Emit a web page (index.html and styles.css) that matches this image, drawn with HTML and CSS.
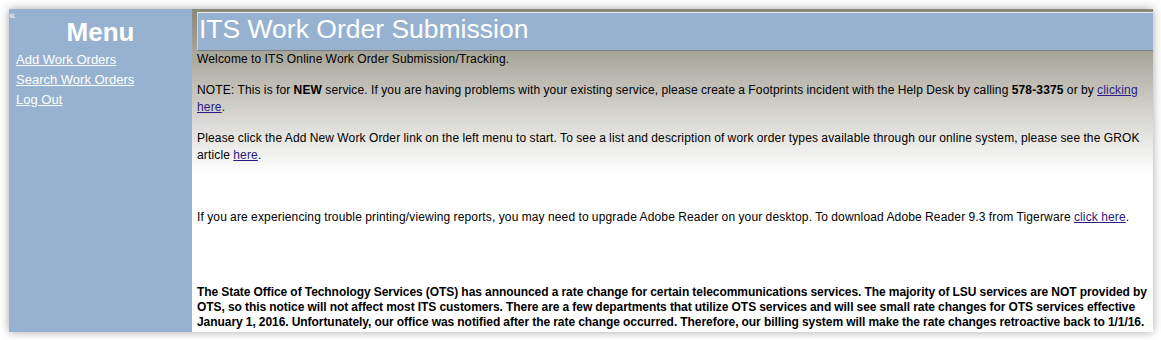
FILE: index.html
```html
<!DOCTYPE html>
<html>
<head>
<meta charset="utf-8">
<link rel="stylesheet" href="styles.css">
</head>
<body>
<div class="window">
  <aside class="sidebar">
    <div class="collapse">&laquo;</div>
    <h2 class="menu-title">Menu</h2>
    <nav class="menu-links">
      <a href="#">Add Work Orders</a>
      <a href="#">Search Work Orders</a>
      <a href="#">Log Out</a>
    </nav>
  </aside>
  <main class="main">
    <h1 class="title">ITS Work Order Submission</h1>
    <p class="para">Welcome to ITS Online Work Order Submission/Tracking.</p>
    <p class="para gap">NOTE: This is for <b>NEW</b> service. If you are having problems with your existing service, please create a Footprints incident with the Help Desk by calling <b>578-3375</b> or by <a href="#">clicking here</a>.</p>
    <p class="para gap">Please click the Add New Work Order link on the left menu to start. To see a list and description of work order types available through our online system, please see the GROK article <a href="#">here</a>.</p>
    <p class="para gap-lg">If you are experiencing trouble printing/viewing reports, you may need to upgrade Adobe Reader on your desktop. To download Adobe Reader 9.3 from Tigerware <a href="#">click here</a>.</p>
    <p class="notice">The State Office of Technology Services (OTS) has announced a rate change for certain telecommunications services. The majority of LSU services are NOT provided by OTS, so this notice will not affect most ITS customers. There are a few departments that utilize OTS services and will see small rate changes for OTS services effective January 1, 2016. Unfortunately, our office was notified after the rate change occurred. Therefore, our billing system will make the rate changes retroactive back to 1/1/16.</p>
  </main>
</div>
</body>
</html>
```

FILE: styles.css
```css
html, body {
  margin: 0;
  padding: 0;
  background: #ffffff;
}

body {
  font-family: "Liberation Sans", Arial, sans-serif;
  width: 1161px;
  height: 340px;
  overflow: hidden;
}

.window {
  margin: 9px 0 0 9px;
  width: 1144px;
  height: 323px;
  display: flex;
  overflow: hidden;
  box-shadow: 0 0 9px rgba(0, 0, 0, 0.35);
}

.sidebar {
  width: 183px;
  flex: none;
  background: #97b2d0;
  color: #ffffff;
  position: relative;
}

.collapse {
  position: absolute;
  left: 0;
  top: 1px;
  font-size: 11px;
  line-height: 11px;
  color: #ffffff;
}

.menu-title {
  margin: 0;
  padding-top: 9px;
  text-align: center;
  font-size: 26px;
  line-height: 28px;
  font-weight: bold;
}

.menu-links {
  display: flex;
  flex-direction: column;
  padding-left: 7px;
  margin-top: 4px;
}

.menu-links a {
  color: #ffffff;
  font-size: 13px;
  line-height: 20px;
  text-decoration: underline;
}

.main {
  flex: 1;
  padding: 3px 0 0 5px;
  background: linear-gradient(to bottom, #8a8879 0px, #a9a69a 45px, #d5d4cf 105px, #f4f4f3 150px, #ffffff 165px);
  color: #000000;
  overflow: hidden;
}

.title {
  margin: 0;
  height: 37px;
  background: #97b2d0;
  border-top: 1px solid #eeeeee;
  border-left: 1px solid #d4d4d4;
  border-bottom: 1px solid #7c7c7c;
  color: #ffffff;
  font-weight: normal;
  font-size: 26.5px;
  line-height: 33px;
  padding-left: 1px;
}

.para {
  margin: 0;
  font-size: 12px;
  line-height: 17px;
  letter-spacing: 0.16px;
  word-spacing: -0.35px;
  padding-right: 3px;
}

.gap {
  margin-top: 14px;
}

.gap-lg {
  margin-top: 45px;
}

.para a, .notice a {
  color: #2c1a84;
}

.notice {
  margin: 59px 0 0 0;
  font-size: 12px;
  line-height: 15px;
  font-weight: bold;
  letter-spacing: -0.06px;
  word-spacing: -0.1px;
  padding-right: 3px;
}
```
